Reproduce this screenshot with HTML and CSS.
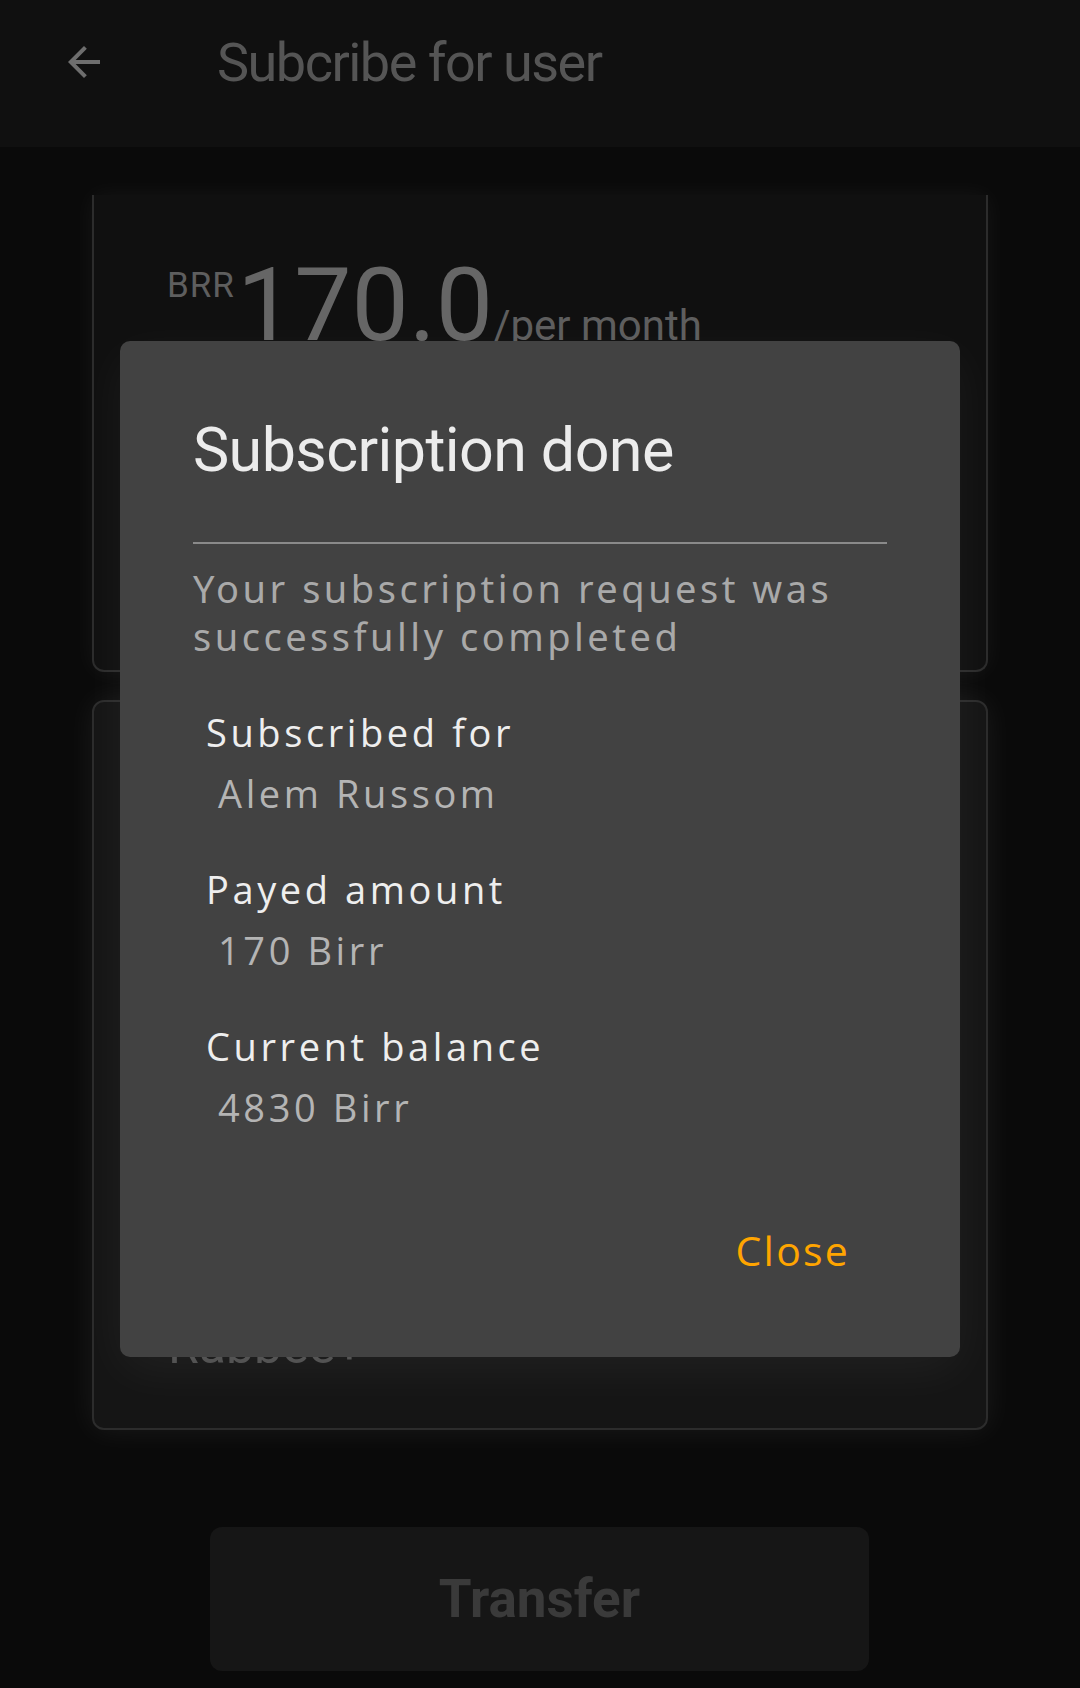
FILE: index.html
```html
<!DOCTYPE html>
<html>
<head>
<meta charset="utf-8">
<link rel="stylesheet" href="styles.css">
</head>
<body>
<div class="screen">
  <header class="appbar">
    <svg class="back" viewBox="0 0 24 24" width="48" height="48"><path d="M20 11H7.83l5.59-5.59L12 4l-8 8 8 8 1.41-1.41L7.83 13H20v-2z" fill="#6e6e6e"/></svg>
    <h1 class="appbar-title">Subcribe for user</h1>
  </header>
  <main class="content">
    <section class="card card-price">
      <div class="price">
        <span class="cur">BRR</span><span class="amount">170.0</span><span class="per">/per month</span>
      </div>
    </section>
    <section class="card card-plan">
      <div class="plan-name">Rabbee+</div>
    </section>
    <div class="btn-row">
      <button class="transfer">Transfer</button>
    </div>
  </main>

  <div class="dialog">
    <h2 class="dlg-title">Subscription done</h2>
    <div class="divider"></div>
    <p class="dlg-body">Your subscription request was successfully completed</p>
    <div class="info">
      <div class="label">Subscribed for</div>
      <div class="value">Alem Russom</div>
    </div>
    <div class="info">
      <div class="label">Payed amount</div>
      <div class="value">170 Birr</div>
    </div>
    <div class="info">
      <div class="label">Current balance</div>
      <div class="value">4830 Birr</div>
    </div>
    <div class="actions">
      <span class="close">Close</span>
    </div>
  </div>
</div>
</body>
</html>
```

FILE: styles.css
```css
* { box-sizing: border-box; }
html, body { margin: 0; padding: 0; }
body {
  width: 1080px;
  height: 1688px;
  background: #0a0a0a;
  font-family: Roboto, "Noto Sans", sans-serif;
  overflow: hidden;
}
.screen {
  position: relative;
  width: 1080px;
  height: 1688px;
  overflow: hidden;
}
.appbar {
  height: 147px;
  background: #101010;
  display: flex;
  align-items: flex-start;
}
.back {
  margin-left: 60px;
  margin-top: 38px;
  flex: none;
}
.appbar-title {
  margin: 31px 0 0 109px;
  font-family: Roboto, sans-serif;
  font-weight: 400;
  font-size: 54px;
  line-height: 64px;
  letter-spacing: -1.5px;
  color: #555555;
}
.content {
  padding: 48px 92px 0;
  display: flex;
  flex-direction: column;
}
.card {
  border: 2px solid #2c2c2c;
  border-radius: 12px;
  background: #101010;
  box-shadow: 0 0 24px rgba(255,255,255,0.05);
}
.card-price {
  height: 477px;
  border-top: none;
  border-top-left-radius: 0;
  border-top-right-radius: 0;
  padding: 50px 0 0 73px;
}
.price {
  display: flex;
  align-items: baseline;
  height: 120px;
}
.cur {
  font-size: 35px;
  line-height: 35px;
  letter-spacing: 1px;
  color: #5e5e5e;
  align-self: flex-start;
  margin-top: 23px;
}
.amount {
  font-size: 102px;
  line-height: 120px;
  color: #666666;
  margin-left: 2px;
}
.per {
  font-size: 42px;
  color: #5e5e5e;
  margin-left: 0;
}
.card-plan {
  margin-top: 28px;
  height: 730px;
  background: #151515;
  box-shadow: 0 0 30px rgba(255,255,255,0.07);
  padding: 614px 0 0 74px;
}
.plan-name {
  font-size: 50px;
  line-height: 60px;
  color: #4e4e4e;
}
.btn-row {
  display: flex;
  justify-content: center;
  margin-top: 97px;
}
.transfer {
  width: 659px;
  height: 144px;
  border: none;
  border-radius: 12px;
  background: #161616;
  color: #3a3a3a;
  font-family: Roboto, sans-serif;
  font-weight: 700;
  font-size: 53px;
  margin-left: -1px;
}

.dialog {
  position: absolute;
  left: 120px;
  top: 341px;
  width: 840px;
  height: 1016px;
  background: #424242;
  border-radius: 10px;
  padding: 73px 73px 0;
  box-shadow: 0 14px 50px rgba(255,255,255,0.05);
}
.dlg-title {
  margin: 0;
  font-family: Roboto, sans-serif;
  font-weight: 400;
  font-size: 61px;
  line-height: 72px;
  letter-spacing: -0.6px;
  color: #ececec;
}
.divider {
  margin-top: 56px;
  height: 2px;
  background: #8a8a8a;
}
.dlg-body {
  margin: 20px 0 0;
  font-family: "Noto Sans", sans-serif;
  font-size: 38px;
  line-height: 48px;
  letter-spacing: 3.5px;
  color: #a9a9a9;
}
.info {
  margin-top: 48px;
  padding-left: 13px;
}
.label {
  font-family: "Open Sans", sans-serif;
  font-size: 38px;
  line-height: 48px;
  letter-spacing: 3.6px;
  color: #eeeeee;
}
.value {
  margin-top: 13px;
  padding-left: 12px;
  font-family: "Open Sans", sans-serif;
  font-size: 38px;
  line-height: 48px;
  letter-spacing: 3.6px;
  color: #b4b4b4;
}
.actions {
  display: flex;
  justify-content: flex-end;
  margin-top: 95px;
  padding-right: 37px;
}
.close {
  font-family: "Open Sans", sans-serif;
  font-size: 41px;
  line-height: 48px;
  letter-spacing: 2.2px;
  color: #ffa500;
}
```
